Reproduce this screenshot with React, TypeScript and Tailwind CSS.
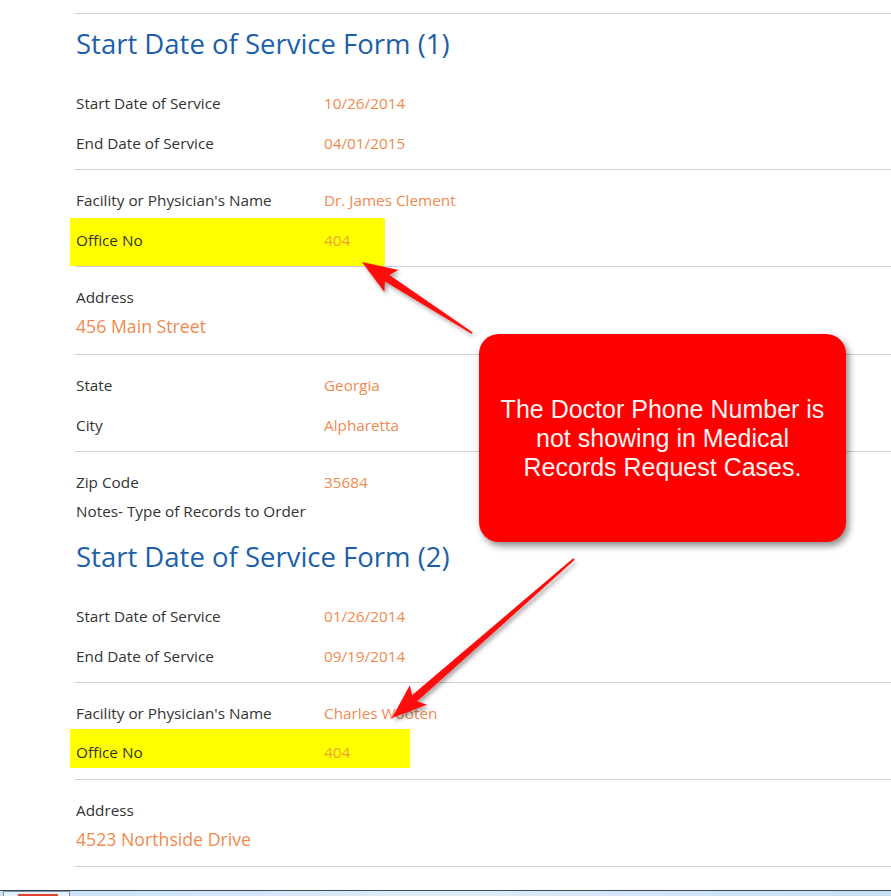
import React from 'react';

const font = { fontFamily: '"Open Sans", "Liberation Sans", sans-serif' };

function Row({ label, value }: { label: string; value: string }) {
  return (
    <div className="flex h-10 items-center pl-px">
      <span className="w-[248px] shrink-0 text-[#333333]">{label}</span>
      <span className="text-[#ef8a4f]">{value}</span>
    </div>
  );
}

function arrow(tail: [number, number], tip: [number, number]) {
  const dx = tip[0] - tail[0];
  const dy = tip[1] - tail[1];
  const len = Math.hypot(dx, dy);
  const ux = dx / len;
  const uy = dy / len;
  const nx = -uy;
  const ny = ux;
  const H = 30;
  const W = 13;
  const bx = tip[0] - ux * H;
  const by = tip[1] - uy * H;
  const wx = bx - ux * 5;
  const wy = by - uy * 5;
  const pts: [number, number][] = [
    [tail[0] + nx * 1, tail[1] + ny * 1],
    [bx + nx * 4, by + ny * 4],
    [wx + nx * W, wy + ny * W],
    tip,
    [wx - nx * W, wy - ny * W],
    [bx - nx * 4, by - ny * 4],
    [tail[0] - nx * 1, tail[1] - ny * 1],
  ];
  return pts.map((p) => `${p[0].toFixed(1)},${p[1].toFixed(1)}`).join(' ');
}

export default function App() {
  return (
    <div className="relative h-[896px] w-full overflow-hidden bg-white text-[15.3px]" style={font}>
      <div className="pl-[75px] pt-[13px]">
        {/* Form 1 */}
        <div className="border-t border-[#cfcfcf]">
          <h2 className="mt-[14px] pl-px text-[27.5px] leading-[31px] text-[#1d5fa9]">Start Date of Service Form (1)</h2>
          <div className="mt-[24px]">
            <Row label="Start Date of Service" value="10/26/2014" />
            <Row label="End Date of Service" value="04/01/2015" />
          </div>
          <div className="h-[6px]" />
        </div>
        <div className="border-t border-[#cfcfcf] pt-[10px]">
          <Row label="Facility or Physician's Name" value="Dr. James Clement" />
          <div className="-ml-[5px] -mt-[2px] flex h-[48px] w-[315px] items-center bg-[#ffff00] pb-[4px] pl-[6px]">
            <span className="w-[248px] shrink-0 text-[#333333]">Office No</span>
            <span className="text-[#f0a030]">404</span>
          </div>
        </div>
        <div className="border-t border-[#cfcfcf] pb-[16px] pl-px pt-[20px]">
          <div className="leading-[20px] text-[#333333]">Address</div>
          <div className="mt-[7px] text-[17.7px] leading-[24px] text-[#ef8a4f]">456 Main Street</div>
        </div>
        <div className="border-t border-[#cfcfcf] pt-[10px]">
          <Row label="State" value="Georgia" />
          <Row label="City" value="Alpharetta" />
          <div className="h-[6px]" />
        </div>
        <div className="border-t border-[#cfcfcf] pt-[10px]">
          <Row label="Zip Code" value="35684" />
          <div className="-mt-px pl-px leading-[20px] text-[#333333]">Notes- Type of Records to Order</div>
        </div>

        {/* Form 2 */}
        <h2 className="mt-[20px] pl-px text-[27.5px] leading-[31px] text-[#1d5fa9]">Start Date of Service Form (2)</h2>
        <div className="mt-[24px]">
          <Row label="Start Date of Service" value="01/26/2014" />
          <Row label="End Date of Service" value="09/19/2014" />
        </div>
        <div className="h-[6px]" />
        <div className="border-t border-[#cfcfcf] pt-[10px]">
          <Row label="Facility or Physician's Name" value="Charles Wooten" />
          <div className="-ml-[5px] -mt-[4px] mb-[11px] flex h-[39px] w-[340px] items-center bg-[#ffff00] pl-[6px] pt-[7px]">
            <span className="w-[248px] shrink-0 text-[#333333]">Office No</span>
            <span className="text-[#f0a030]">404</span>
          </div>
        </div>
        <div className="border-y border-[#cfcfcf] pb-[15px] pl-px pt-[20px]">
          <div className="leading-[20px] text-[#333333]">Address</div>
          <div className="mt-[7px] text-[17.7px] leading-[24px] text-[#ef8a4f]">4523 Northside Drive</div>
        </div>
      </div>

      {/* taskbar strip */}
      <div className="mt-[23px] flex h-[6px] border-t border-[#3b4856] bg-gradient-to-r from-[#c9e0f5] via-[#dcecfa] to-[#c7def4]">
        <div className="ml-[3px] flex w-[67px] border-x border-t border-[#7d8fa3] bg-[#e6f0fa] pl-[14px] pt-[2px]">
          <div className="h-full w-[40px] bg-[#e04030]" />
        </div>
      </div>

      {/* arrows */}
      <svg className="pointer-events-none absolute left-0 top-0" width="891" height="896" viewBox="0 0 891 896">
        <defs>
          <filter id="sh" x="-20%" y="-20%" width="140%" height="140%">
            <feDropShadow dx="2" dy="3" stdDeviation="2" floodColor="#000" floodOpacity="0.35" />
          </filter>
        </defs>
        <polygon points={arrow([472, 333], [362, 262])} fill="#ff0a0a" filter="url(#sh)" />
        <polygon points={arrow([574, 559], [392, 718])} fill="#ff0a0a" filter="url(#sh)" />
      </svg>

      {/* callout */}
      <div
        className="absolute left-[479px] top-[334px] flex h-[208px] w-[367px] items-center justify-center rounded-[20px] bg-[#ff0000] text-center text-[25px] leading-[29px] text-[#fbf2f2] shadow-[3px_4px_7px_rgba(0,0,0,0.45)]"
        style={{ fontFamily: '"Liberation Sans", Arial, sans-serif' }}
      >
        <p>
          The Doctor Phone Number is
          <br />
          not showing in Medical
          <br />
          Records Request Cases.
        </p>
      </div>
    </div>
  );
}
